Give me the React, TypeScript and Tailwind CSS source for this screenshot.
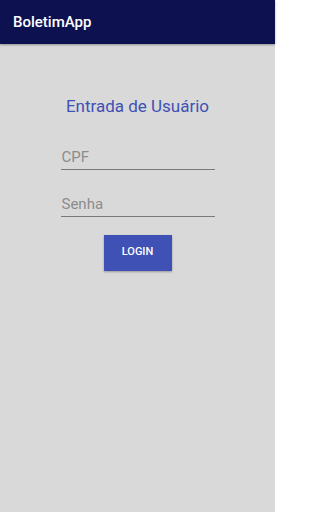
import React from 'react';

export default function App() {
  return (
    <div className="flex min-h-screen w-[275px] flex-col bg-[#d9d9d9] font-['Roboto',sans-serif]">
      <div className="flex h-[44px] items-center bg-[#0e1150] pl-[13px] shadow-[0_1px_2px_rgba(0,0,0,0.35)]">
        <span className="text-[15px] font-medium text-white">BoletimApp</span>
      </div>

      <div className="flex flex-col items-center pt-[50px]">
        <h1 className="text-[17px] text-[#3f51b5]">Entrada de Usuário</h1>

        <div className="mt-[25px] flex w-[154px] flex-col gap-[22px]">
          <div className="border-b border-[#7a7a7a] pl-[1px]">
            <input
              placeholder="CPF"
              className="w-full bg-transparent text-[15px] text-[#555] placeholder-[#8c8c8c] outline-none"
            />
          </div>
          <div className="border-b border-[#7a7a7a] pl-[1px]">
            <input
              type="password"
              placeholder="Senha"
              className="w-full bg-transparent text-[15px] text-[#555] placeholder-[#8c8c8c] outline-none"
            />
          </div>
        </div>

        <button className="mt-[18px] h-[36px] w-[68px] bg-[#3f51b5] text-[11px] font-medium text-white shadow-[0_1px_2px_rgba(0,0,0,0.3)]">
          LOGIN
        </button>
      </div>
    </div>
  );
}
